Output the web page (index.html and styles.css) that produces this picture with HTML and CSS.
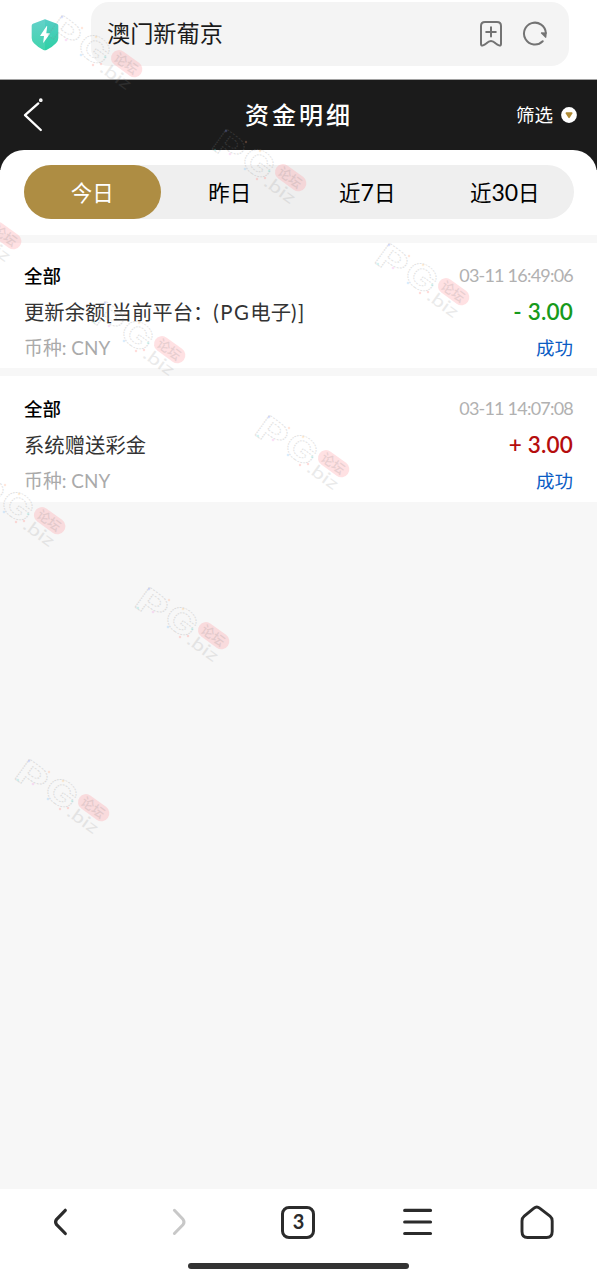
FILE: index.html
```html
<!DOCTYPE html>
<html lang="zh-CN">
<head>
<meta charset="utf-8">
<title>资金明细</title>
<link rel="stylesheet" href="styles.css">
</head>
<body>
<div class="screen">
  <div class="browser-bar">
    <svg class="shield" width="28" height="32" viewBox="0 0 28 32">
      <defs><linearGradient id="mint" x1="0" y1="0" x2="0" y2="1"><stop offset="0" stop-color="#55cdc5"/><stop offset="1" stop-color="#2fd0a5"/></linearGradient></defs>
      <path d="M12.6.7Q14 0 15.4.7L26 4.7Q27.3 5.3 27.3 6.8V19Q27.3 22 25 24.2Q20.5 28.800 15.5 30.900Q14 31.500 12.500 30.900Q7.500 28.800 3 24.200Q.7 22 .7 19V6.800Q.7 5.300 2 4.700Z" fill="url(#mint)"/>
      <path d="M14 .5V31.300Q7.500 28.800 3 24.200Q.7 22 .7 19V6.800Q.7 5.300 2 4.700Z" fill="#fff" opacity=".09"/>
      <path d="M15.500 7.200 9.300 16.400Q9 17 9.700 17H13L12.200 23.300Q12.200 24 12.700 23.400L18.700 14.900Q19 14.200 18.300 14.200H15.300L16.200 7.600Q16.200 6.700 15.500 7.200Z" fill="#fff"/>
    </svg>
    <div class="address">
      <span class="site">澳门新葡京</span>
      <svg class="bookmark" width="24" height="28" viewBox="0 0 24 28" fill="none" stroke="#737373" stroke-width="2" stroke-linecap="round" stroke-linejoin="round">
        <path d="M2 6Q2 2 6 2H18Q22 2 22 6V24Q22 26 20 25.400Q18.500 25 16.500 23.200Q12 18.800 7.500 23.200Q5.500 25 4 25.400Q2 26 2 24Z"/>
        <path d="M12 7.300V16.500M7.200 12H16.800"/>
      </svg>
      <svg class="reload" width="26" height="26" viewBox="0 0 26 26">
        <path d="M20.700 20.200A10.900 10.900 0 1 1 23.800 12" fill="none" stroke="#737373" stroke-width="2" stroke-linecap="round"/>
        <path d="M19.200 11.300 24.800 11.600 24.300 16.400Q23.800 17.300 23.100 16.500L18.800 12.300Z" fill="#737373"/>
      </svg>
    </div>
  </div>

  <header class="page-head">
    <svg class="back" width="24" height="36" viewBox="0 0 24 36" fill="none" stroke="#fff" stroke-width="2.300" stroke-linecap="round" stroke-linejoin="round"><path d="M16.300 6.400 3 18.200 18.800 33"/><circle cx="18.800" cy="3.200" r=".7" fill="#fff"/></svg>
    <h1 class="page-title">资金明细</h1>
    <div class="filter"><span>筛选</span>
      <svg width="16" height="16" viewBox="0 0 16 16"><circle cx="8" cy="8" r="7.900" fill="#fff"/><path d="M5.200 5.200H10.900Q11.900 5.500 11.400 6.600L8.700 10.800Q8.100 11.500 7.400 10.800L4.700 6.600Q4.300 5.500 5.200 5.200Z" fill="#af8a35"/></svg>
    </div>
  </header>

  <div class="sheet">
    <nav class="tabs">
      <span class="tab active">今日</span><span class="tab">昨日</span><span class="tab">近<i class="num">7</i>日</span><span class="tab">近<i class="num">30</i>日</span>
    </nav>
  </div>

  <main class="records">
    <section class="record">
      <div class="line first"><b class="kind">全部</b><span class="time">03-11 16:49:06</span></div>
      <div class="line second"><span class="desc">更新余额[当前平台：<span class="latin">(PG</span>电子<span class="latin">)]</span></span><span class="amount minus">- 3.00</span></div>
      <div class="line third"><span class="coin">币种: CNY</span><span class="status">成功</span></div>
    </section>
    <section class="record">
      <div class="line first"><b class="kind">全部</b><span class="time">03-11 14:07:08</span></div>
      <div class="line second"><span class="desc">系统赠送彩金</span><span class="amount plus">+ 3.00</span></div>
      <div class="line third"><span class="coin">币种: CNY</span><span class="status">成功</span></div>
    </section>
  </main>

  <footer class="toolbar">
    <div class="buttons">
      <svg width="36" height="36" viewBox="0 0 36 36" fill="none" stroke="#2b2b2b" stroke-width="3.200" stroke-linecap="round" stroke-linejoin="round"><path d="M23.300 6.300 14.600 15.300Q12.600 18 14.600 20.700L23.300 29.500"/></svg>
      <svg width="36" height="36" viewBox="0 0 36 36" fill="none" stroke="#c8c8c8" stroke-width="3" stroke-linecap="round" stroke-linejoin="round"><path d="M13.400 6.300 22 15.300Q24 18 22 20.700L13.400 29.500"/></svg>
      <div class="tab-count">3</div>
      <svg width="36" height="36" viewBox="0 0 36 36" stroke="#2b2b2b" stroke-width="3.200" stroke-linecap="round"><path d="M4.700 6.400H30.500M4.700 18H30.500M4.700 29.500H30.500"/></svg>
      <svg width="36" height="36" viewBox="0 0 36 36" fill="none" stroke="#2b2b2b" stroke-width="2.900" stroke-linejoin="round"><path d="M15 4.200Q17.800 1.800 20.600 4.200L31 12.200Q33.200 14 33.200 17V27.500Q33.200 33.500 27.500 33.500H8.500Q3 33.500 3 27.500V17Q3 14 5.200 12.200Z"/></svg>
    </div>
    <div class="home-bar"></div>
  </footer>

  <svg class="marks" width="597" height="1280" viewBox="0 0 597 1280" aria-hidden="true">
    <defs>
      <g id="mark">
        <g transform="translate(6 28) rotate(36)">
          <g class="mark-outline">
            <text class="mark-big" x="-3" y="0" textLength="31" lengthAdjust="spacingAndGlyphs">P</text>
            <text class="mark-big" x="30" y="-4" textLength="32" lengthAdjust="spacingAndGlyphs">G</text>
          </g>
          <text class="mark-small" x="62" y="-1" textLength="34" lengthAdjust="spacingAndGlyphs">.biz</text>
          <rect x="63" y="-31" width="35" height="16" rx="8" fill="#ff9ba3" opacity=".3"/>
          <text class="mark-cn" x="67" y="-18" textLength="26">论坛</text>
        </g>
        <g opacity=".25"><circle cx="20" cy="10" r="1.300" fill="#8297ff"/><circle cx="24" cy="33" r="1.300" fill="#ef8be2"/><circle cx="9" cy="29" r="1.200" fill="#62d4cd"/><circle cx="40" cy="21" r="1.200" fill="#ffa275"/><circle cx="54" cy="30" r="1.300" fill="#ffc26e"/><circle cx="39" cy="48" r="1.300" fill="#70b9fb"/><circle cx="51" cy="58" r="1.200" fill="#ff7770"/><circle cx="59" cy="57" r="1.200" fill="#ff7770"/><circle cx="63" cy="50" r="1.200" fill="#65ddd5"/></g>
      </g>
    </defs>
    <use href="#mark" x="42" y="7"/>
    <use href="#mark" x="206" y="121"/>
    <use href="#mark" x="369" y="235"/>
    <use href="#mark" x="-79" y="179"/>
    <use href="#mark" x="85" y="293"/>
    <use href="#mark" x="249" y="407"/>
    <use href="#mark" x="-35" y="464"/>
    <use href="#mark" x="129" y="579"/>
    <use href="#mark" x="9" y="751"/>
  </svg>
</div>
</body>
</html>
```
FILE: styles.css
```css
* { box-sizing: border-box; }
body { margin: 0; }
svg { display: block; flex: none; }

.screen {
  position: relative;
  width: 597px;
  height: 1280px;
  overflow: hidden;
  display: flex;
  flex-direction: column;
  background: #f7f7f7;
  color: #000;
  font-family: "Noto Sans CJK SC", sans-serif;
  white-space: nowrap;
}

.browser-bar {
  height: 80px;
  flex: none;
  display: flex;
  align-items: flex-start;
  padding: 2px 28px 0 31px;
  background: #fff;
  border-bottom: 1px solid #a2a2a2;
}
.shield { margin-top: 17px; }
.address {
  flex: 1;
  height: 64px;
  margin-left: 32px;
  padding: 0 21px 0 16px;
  display: flex;
  align-items: center;
  border-radius: 18px;
  background: #f4f4f4;
}
.site { flex: 1; font-size: 23.200px; line-height: 61px; padding-bottom: 3px; color: #1b1b1b; }
.bookmark { margin-right: 19px; }

.page-head {
  height: 90px;
  flex: none;
  display: grid;
  grid-template-columns: 1fr auto 1fr;
  align-items: center;
  padding: 0 20px 20px 22px;
  background: #1b1b1b;
  color: #fff;
}
.page-title { margin: 0 1px 2px 0; font-size: 24px; font-weight: 500; letter-spacing: 3px; line-height: 34px; }
.filter { display: flex; align-items: center; justify-content: flex-end; gap: 8px; font-size: 18.500px; line-height: 26px; }
.filter span { padding-bottom: 2px; }

.sheet {
  height: 85.500px;
  flex: none;
  margin-top: -20.500px;
  padding: 15.500px 23.500px 0;
  border-radius: 24px 24px 0 0;
  background: #fff;
}
.tabs { display: flex; height: 54px; border-radius: 27px; background: #efefef; }
.tab { flex: 1; line-height: 53px; height: 54px; border-radius: 27px; text-align: center; font-size: 21.500px; }
.tab.active { background: #ae8d43; color: #fff; }
.num { font-family: Lato, sans-serif; font-style: normal; font-size: 23px; }

.records { display: flex; flex-direction: column; gap: 8px; padding-top: 8px; flex: 1; }
.record { height: 125.400px; padding: 17.500px 24px 0 24px; background: #fff; }
.line { display: flex; justify-content: space-between; align-items: center; }
.first { height: 29px; }
.second { height: 43px; }
.third { height: 28px; }
.kind { font-size: 18.500px; font-weight: 500; }
.time { font-family: Lato, sans-serif; font-size: 18px; letter-spacing: -.78px; color: #b1b1b1; }
.desc { font-family: Lato, "Noto Sans CJK SC", sans-serif; font-size: 20.350px; color: #333; }
.latin { letter-spacing: 1.500px; }
.amount { font-family: Lato, sans-serif; font-size: 22.500px; font-weight: 600; letter-spacing: .2px; padding-top: 1px; }
.minus { color: #179a1b; }
.plus { color: #b50d0d; }
.coin { font-family: Lato, "Noto Sans CJK SC", sans-serif; font-size: 18.900px; color: #aaa; }
.status { font-size: 18.500px; color: #0b5cc4; }

.toolbar { height: 91px; flex: none; padding-top: 15px; background: #fff; display: flex; flex-direction: column; align-items: center; }
.buttons { width: 597px; display: grid; grid-template-columns: repeat(5, 1fr); justify-items: center; align-items: center; height: 36px; }
.tab-count {
  width: 34px;
  height: 33px;
  border: 3px solid #2b2b2b;
  border-radius: 8px;
  text-align: center;
  font: 700 20px/25px Lato, sans-serif;
  color: #2b2b2b;
}
.home-bar { width: 221px; height: 6px; margin-top: 23px; border-radius: 3px; background: #333; }

.marks { position: absolute; left: 0; top: 0; pointer-events: none; }
.mark-outline { fill: none; stroke: #888; stroke-width: .9; stroke-dasharray: 1.500 1; opacity: .24; }
.mark-big { font: 700 34px Inter, sans-serif; }
.mark-small { font: 400 17px Lato, sans-serif; fill: #888; opacity: .17; }
.mark-cn { font: 500 13px "Noto Sans CJK SC", sans-serif; fill: #777; opacity: .17; }
```
